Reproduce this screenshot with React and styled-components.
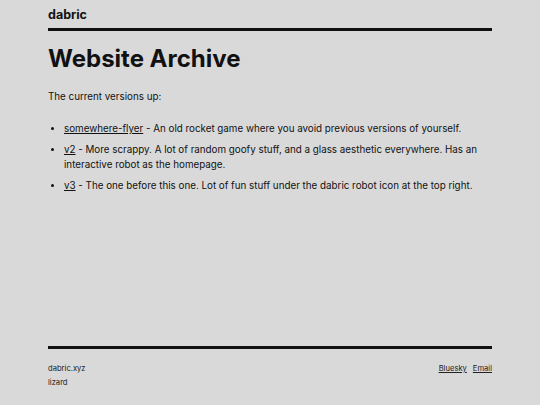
import React from 'react'
import styled, { createGlobalStyle } from 'styled-components'

const GlobalStyle = createGlobalStyle`
  html, body {
    margin: 0;
    padding: 0;
    background: #d9d9d9;
  }
  body {
    font-family: Inter, "Liberation Sans", sans-serif;
    color: #111;
  }
`

const Page = styled.div`
  min-height: 100vh;
  box-sizing: border-box;
  padding: 0 48px;
  display: flex;
  flex-direction: column;
`

const Header = styled.header`
  padding-top: 5px;
  padding-bottom: 5px;
  line-height: 16px;
  border-bottom: 3px solid #111;
`

const Brand = styled.a`
  font-size: 12.5px;
  font-weight: 700;
  color: #111;
  text-decoration: none;
`

const Main = styled.main`
  flex: 1;
`

const Title = styled.h1`
  font-size: 24px;
  font-weight: 700;
  margin: 13px 0 15px;
  line-height: 30px;
`

const Intro = styled.p`
  font-size: 9.8px;
  margin: 0 0 17px;
  line-height: 15px;
`

const List = styled.ul`
  margin: 0;
  padding-left: 16px;
  font-size: 9.8px;
  line-height: 15px;

  li {
    margin-bottom: 6px;
  }
`

const Link = styled.a`
  color: #111;
  text-decoration: underline;
  text-underline-offset: 1px;
`

const Footer = styled.footer`
  border-top: 3px solid #111;
  padding: 13px 0 15px;
  display: flex;
  justify-content: space-between;
  align-items: flex-start;
  font-size: 7.6px;
  line-height: 14px;
  color: #222;
`

const FooterLinks = styled.div`
  display: flex;
  gap: 6px;
`

const FooterLink = styled.a`
  color: #222;
  text-decoration: underline;
`

const items = [
  { name: 'somewhere-flyer', text: 'An old rocket game where you avoid previous versions of yourself.' },
  { name: 'v2', text: 'More scrappy. A lot of random goofy stuff, and a glass aesthetic everywhere. Has an interactive robot as the homepage.' },
  { name: 'v3', text: 'The one before this one. Lot of fun stuff under the dabric robot icon at the top right.' },
]

export default function App() {
  return (
    <>
      <GlobalStyle />
      <Page>
        <Header>
          <Brand href="#">dabric</Brand>
        </Header>
        <Main>
          <Title>Website Archive</Title>
          <Intro>The current versions up:</Intro>
          <List>
            {items.map((item) => (
              <li key={item.name}>
                <Link href="#">{item.name}</Link> - {item.text}
              </li>
            ))}
          </List>
        </Main>
        <Footer>
          <div>
            <div>dabric.xyz</div>
            <div>lizard</div>
          </div>
          <FooterLinks>
            <FooterLink href="#">Bluesky</FooterLink>
            <FooterLink href="#">Email</FooterLink>
          </FooterLinks>
        </Footer>
      </Page>
    </>
  )
}
